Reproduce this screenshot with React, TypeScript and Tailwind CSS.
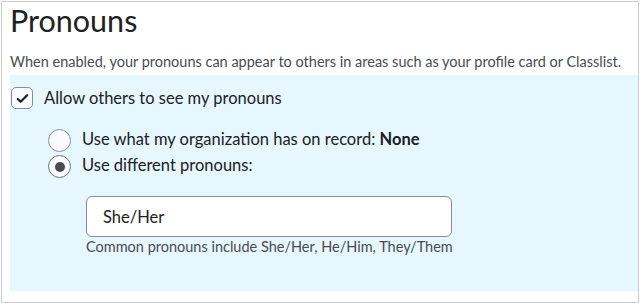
import { useState } from "react";

function Radio({ checked }: { checked: boolean }) {
  return (
    <span
      className={
        "mt-[3px] flex h-[23px] w-[23px] shrink-0 items-center justify-center rounded-full border bg-[#f9fbff] " +
        (checked ? "border-[#6e7477]" : "border-[#8a9094]")
      }
    >
      {checked && <span className="h-[10px] w-[10px] rounded-full bg-[#494c4e]" />}
    </span>
  );
}

export default function App() {
  const [allow, setAllow] = useState(true);
  const [useCustom, setUseCustom] = useState(true);
  const [pronouns, setPronouns] = useState("She/Her");

  return (
    <div className="ml-px mt-px h-[302px] w-[638px] border border-[#cdcdcd] bg-white font-['Lato',sans-serif] text-[#202122]">
      <div className="pl-2">
        <h1 className="text-[30.5px] leading-[36px] font-normal">Pronouns</h1>
        <p className="mt-[14px] text-[14.5px] leading-[20px] text-[#494c4e]">
          When enabled, your pronouns can appear to others in areas such as your profile card or Classlist.
        </p>
      </div>

      {/* Settings panel */}
      <div className="ml-2 mt-[3px] bg-[#e6f7ff] pb-[34px] pt-[11px]">
        <label className="flex items-center gap-[11px] pl-px">
          <button
            onClick={() => setAllow(!allow)}
            className="flex h-[22px] w-[22px] items-center justify-center rounded-[5px] border border-[#868c8f] bg-[#f9fbff]"
          >
            {allow && (
              <svg viewBox="0 0 16 16" className="h-[15px] w-[15px]">
                <path
                  d="M3 8.5l3 3 7-7"
                  fill="none"
                  stroke="#202122"
                  strokeWidth="2.4"
                  strokeLinecap="round"
                  strokeLinejoin="round"
                />
              </svg>
            )}
          </button>
          <span className="text-[16.5px] leading-[24px]">Allow others to see my pronouns</span>
        </label>

        <div className="mt-[16px] pl-[38px]">
          <div className="flex cursor-pointer items-start gap-[11px]" onClick={() => setUseCustom(false)}>
            <Radio checked={!useCustom} />
            <span className="text-[16.5px] leading-[26px]">
              Use what my organization has on record: <b className="font-bold">None</b>
            </span>
          </div>
          <div className="flex cursor-pointer items-start gap-[11px]" onClick={() => setUseCustom(true)}>
            <Radio checked={useCustom} />
            <span className="text-[16.5px] leading-[26px]">Use different pronouns:</span>
          </div>

          <div className="ml-[38px] mt-[18px] w-[366px]">
            <input
              value={pronouns}
              onChange={(e) => setPronouns(e.target.value)}
              className="h-[41px] w-full rounded-[6px] border border-[#868c8f] bg-white px-4 text-[16.5px] text-[#202122] outline-none"
            />
            <p className="whitespace-nowrap text-[14.5px] leading-[20px] text-[#494c4e]">
              Common pronouns include She/Her, He/Him, They/Them
            </p>
          </div>
        </div>
      </div>
    </div>
  );
}
